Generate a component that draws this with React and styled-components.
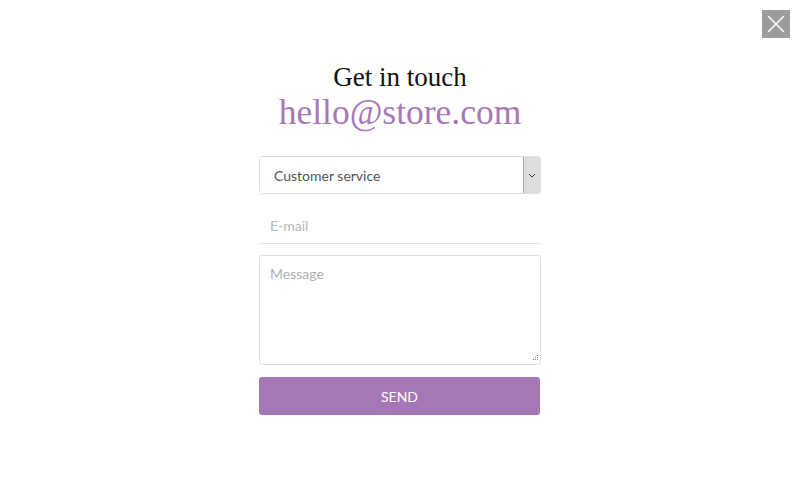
import React from 'react';
import styled, { createGlobalStyle } from 'styled-components';

const GlobalStyle = createGlobalStyle`
  html, body {
    margin: 0;
    padding: 0;
    background: #ffffff;
    font-family: Lato, "Liberation Sans", sans-serif;
  }
  * { box-sizing: border-box; }
`;

const Page = styled.div`
  position: relative;
  width: 800px;
  height: 500px;
  display: flex;
  flex-direction: column;
  align-items: center;
  padding-top: 62px;
`;

const CloseButton = styled.button`
  position: absolute;
  top: 10px;
  right: 10px;
  width: 28px;
  height: 28px;
  padding: 0;
  border: none;
  background: #9c9c9c;
  display: flex;
  align-items: center;
  justify-content: center;
  cursor: pointer;
`;

const Title = styled.h2`
  margin: 0;
  font-family: "Liberation Serif", serif;
  font-weight: 400;
  font-size: 27px;
  line-height: 31px;
  color: #111;
`;

const Email = styled.h1`
  margin: 0;
  font-family: "Liberation Serif", serif;
  font-weight: 400;
  font-size: 35.5px;
  line-height: 38px;
  color: #a877b8;
`;

const Form = styled.form`
  width: 282px;
  margin-top: 25px;
  display: flex;
  flex-direction: column;
`;

const SelectBox = styled.div`
  height: 38px;
  display: flex;
  border: 1px solid #dedede;
  border-radius: 3px;
  overflow: hidden;
`;

const Select = styled.select`
  flex: 1;
  appearance: none;
  border: none;
  outline: none;
  background: #fff;
  padding: 0 14px;
  font-family: Lato, sans-serif;
  font-size: 14px;
  color: #555;
`;

const Arrow = styled.span`
  width: 17px;
  background: #dddddd;
  border-left: 1px solid #a9a9a9;
  display: flex;
  align-items: center;
  justify-content: center;
`;

const Input = styled.input`
  margin-top: 13px;
  height: 37px;
  border: none;
  border-bottom: 1px solid #e2e2e2;
  outline: none;
  padding: 0 11px;
  font-family: Lato, sans-serif;
  font-size: 14px;
  color: #555;
  &::placeholder { color: #b9b9b9; }
`;

const MessageBox = styled.div`
  position: relative;
  margin-top: 11px;
  display: flex;
`;

const TextArea = styled.textarea`
  flex: 1;
  height: 110px;
  border: 1px solid #dedede;
  border-radius: 3px;
  outline: none;
  padding: 9px 10px;
  font-family: Lato, sans-serif;
  font-size: 14px;
  color: #555;
  resize: none;
  &::placeholder { color: #b0b0b0; }
`;

const Grip = styled.svg`
  position: absolute;
  right: 3px;
  bottom: 3px;
  pointer-events: none;
`;

const SendButton = styled.button`
  margin-top: 12px;
  width: 281px;
  height: 38px;
  border: none;
  border-radius: 3px;
  background: #a777b5;
  color: #fff;
  font-family: Lato, sans-serif;
  font-size: 14px;
  cursor: pointer;
`;

const gripDots = [[6, 0], [4, 2], [6, 2], [2, 4], [4, 4], [6, 4]];

export default function App() {
  return (
    <>
      <GlobalStyle />
      <Page>
        <CloseButton aria-label="close">
          <svg width="18" height="18" viewBox="0 0 18 18">
            <path d="M1 1 L17 17 M17 1 L1 17" stroke="#fff" strokeWidth="1.6" />
          </svg>
        </CloseButton>
        <Title>Get in touch</Title>
        <Email>hello@store.com</Email>
        <Form onSubmit={(e) => e.preventDefault()}>
          <SelectBox>
            <Select defaultValue="cs">
              <option value="cs">Customer service</option>
              <option value="sales">Sales</option>
            </Select>
            <Arrow>
              <svg width="8" height="5" viewBox="0 0 8 5">
                <path d="M1 1 L4 4 L7 1" fill="none" stroke="#333" strokeWidth="1" />
              </svg>
            </Arrow>
          </SelectBox>
          <Input type="email" placeholder="E-mail" />
          <MessageBox>
            <TextArea placeholder="Message" />
            <Grip width="7" height="7" viewBox="0 0 7 7">
              {gripDots.map(([x, y]) => (
                <rect key={`${x}-${y}`} x={x} y={y} width="1" height="1" fill="#8a8a8a" />
              ))}
            </Grip>
          </MessageBox>
          <SendButton type="submit">SEND</SendButton>
        </Form>
      </Page>
    </>
  );
}
